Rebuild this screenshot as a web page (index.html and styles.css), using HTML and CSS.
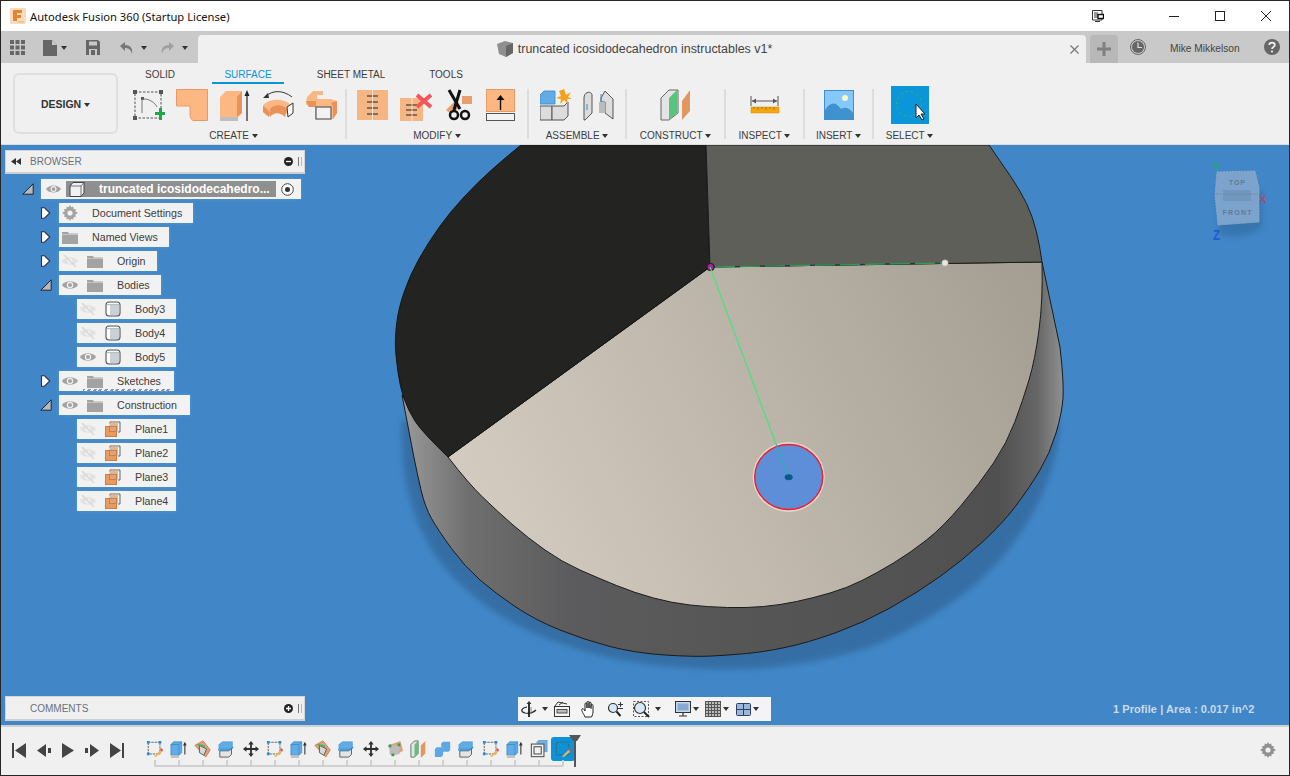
FILE: index.html
```html
<!DOCTYPE html>
<html lang="en">
<head>
<meta charset="utf-8">
<title>Autodesk Fusion 360</title>
<link rel="stylesheet" href="styles.css">
</head>
<body>
<svg class="defs" width="0" height="0" aria-hidden="true">
  <defs>
    <symbol id="eye" viewBox="0 0 16 12"><path d="M0 6C3 1 13 1 16 6C13 11 3 11 0 6Z" fill="#a3a3a3"/><circle cx="8" cy="6" r="3.2" fill="#f2f2f2"/><circle cx="8" cy="6" r="2" fill="#a3a3a3"/></symbol>
    <symbol id="eye-off" viewBox="0 0 16 12"><path d="M0 6C3 1 13 1 16 6C13 11 3 11 0 6Z" fill="#e2e2e2"/><circle cx="8" cy="6" r="2.6" fill="#f2f2f2"/><path d="M2 0L14 12" stroke="#d8d8d8" stroke-width="1.6"/></symbol>
    <symbol id="folder" viewBox="0 0 16 14"><path d="M0 2H6L7 3.5H16V14H0Z" fill="#a3a3a3"/><path d="M0 4.5H16" stroke="#d4d4d4" stroke-width=".7"/></symbol>
    <symbol id="body" viewBox="0 0 16 16"><rect x="1" y="1" width="14" height="14" rx="3" fill="#fff" stroke="#555" stroke-width="1.1"/><rect x="5" y="4" width="9" height="10" fill="#c9d0d6"/><path d="M1.5 3.6H14.5" stroke="#999" stroke-width=".7"/></symbol>
    <symbol id="plane" viewBox="0 0 16 16"><path d="M5 3V1H15V11H13" fill="none" stroke="#666"/><rect x="4.500" y="1.500" width="8.500" height="9" fill="#e1b598"/><rect x="0.500" y="5.500" width="11" height="10" fill="#e79a62" stroke="#d07f44"/><rect x="4.500" y="5.500" width="7" height="5" fill="#dba27c" stroke="#c77b45" stroke-width=".8"/></symbol>
    <symbol id="exp-right" viewBox="0 0 11 12"><path d="M1.500 .8H4.500L9.800 6L4.500 11.200H1.500Z" fill="#fff" stroke="#2a3140" stroke-width="1.1"/></symbol>
    <symbol id="exp-down" viewBox="0 0 12 12"><path d="M.8 11.200L11.200 .8V11.200Z" fill="#b9b9b9" stroke="#20252e" stroke-width="1"/></symbol>
    <symbol id="tl-sketch" viewBox="0 0 20 20"><rect x="2.500" y="2.500" width="13" height="13" fill="none" stroke="#555" stroke-dasharray="2.500 1"/><path d="M1 1h3v3h-3zM14 1h3v3h-3zM1 14h3v3h-3z" fill="#1c8fe0"/><path d="M9 18L16 11L18 13L11 19Z" fill="#e5b95c"/><path d="M15.500 10.500L17 9L19 11L18 13Z" fill="#e24a5c"/></symbol>
    <symbol id="tl-extrude" viewBox="0 0 20 20"><path d="M1 5L4 2H13V14L10 17H1Z" fill="#62ace6" stroke="#2f82c4" stroke-width=".7"/><path d="M1 5H10V17M10 5L13 2" fill="none" stroke="#2f82c4" stroke-width=".7"/><path d="M1 17H10V20H1Z" fill="#c4c4c4"/><path d="M16.500 4V16" stroke="#333" stroke-width="1.200"/><path d="M14.500 6L16.500 2L18.500 6Z" fill="#333"/></symbol>
    <symbol id="tl-loft" viewBox="0 0 20 20"><path d="M1 6L10 1L18 11L13 19Z" fill="#dda27a" stroke="#c77d4c"/><path d="M6 6L14 10L11 17L6 14Z" fill="#d7d7d7" stroke="#555"/><path d="M4 5L12 7" stroke="#39b56a" stroke-width="1.600"/></symbol>
    <symbol id="tl-split" viewBox="0 0 20 20"><path d="M1 5L5 2H16V8L13 10H1Z" fill="#62ace6" stroke="#2f82c4" stroke-width=".5"/><path d="M2 12H12L15 9V16L12 19H2Z" fill="#e4e4e4" stroke="#555"/><path d="M0 11H13L17 8" fill="none" stroke="#1c8fe0" stroke-width="1.400"/></symbol>
    <symbol id="tl-move" viewBox="0 0 20 20"><path d="M10 1L13 5H11V9H15V7L19 10L15 13V11H11V15H13L10 19L7 15H9V11H5V13L1 10L5 7V9H9V5H7Z" fill="#2e2e2e"/></symbol>
    <symbol id="tl-pattern" viewBox="0 0 20 20"><path d="M2 6L16 1L19 12L8 18Z" fill="#dca27c"/><rect x="4" y="6" width="11" height="10" fill="#bcbcbc"/><path d="M3 5h3v3h-3zM13 4h3v3h-3zM6 15h3v3h-3z" fill="#27a650"/></symbol>
    <symbol id="tl-construct" viewBox="0 0 20 20"><path d="M1 5L5 1H9V15L5 19H1Z" fill="#e4e4e4" stroke="#666"/><path d="M5 5L9 1V15L5 19Z" fill="#58c47e"/><path d="M12 6L17 1V15L12 20Z" fill="#e1975f"/></symbol>
    <symbol id="tl-combine" viewBox="0 0 20 20"><path d="M1 10L3 8H10V17L8 19H1Z" fill="#5da8e4"/><path d="M8 4L10 2H18V11L16 13H10V8H8Z" fill="#5da8e4"/></symbol>
    <symbol id="tl-offset" viewBox="0 0 20 20"><path d="M7 3L10 0H19V13H16" fill="#6fb0e5" stroke="#5a94c6" stroke-width=".7"/><rect x="1.500" y="4.500" width="14" height="14" fill="#f1f1f1" stroke="#555" stroke-width="1.200"/><rect x="4.500" y="7.500" width="8" height="8" fill="none" stroke="#555" stroke-width="1.200"/></symbol>
    <symbol id="tl-sketch-active" viewBox="0 0 20 20"><rect x="2.500" y="2.500" width="14" height="14" fill="none" stroke="#5a5a5a" stroke-dasharray="3 1"/><path d="M9 18L16 11L18 13L11 19Z" fill="#e5b95c"/><path d="M15.500 10.500L17 9L19 11L18 13Z" fill="#e24a5c"/></symbol>
  </defs>
</svg>

<div class="window">
  <header class="titlebar">
    <svg class="app-logo" viewBox="0 0 16 16"><rect width="16" height="16" rx="1" fill="#f8dcc0"/><path d="M3 2H12V5H7V7H11V10H7V13H3Z" fill="#e8842c"/><path d="M8 13H14V15H8Z" fill="#f4c496"/></svg>
    <span class="app-title">Autodesk Fusion 360 (Startup License)</span>
    <div class="win-controls">
      <span class="win-btn"><svg width="12" height="12" viewBox="0 0 12 12"><path d="M.5 .5H10V10H.5ZM3 2V8M5 2V8" fill="none" stroke="#333"/><rect x="6" y="4.500" width="5.500" height="4" fill="#fff" stroke="#111" stroke-width="1.400"/><path d="M3 11.500H8" stroke="#333"/></svg></span>
      <span class="win-btn"><svg width="12" height="12" viewBox="0 0 12 12"><path d="M1 6.500H11" stroke="#222"/></svg></span>
      <span class="win-btn"><svg width="12" height="12" viewBox="0 0 12 12"><rect x="1.500" y="1.500" width="9" height="9" fill="none" stroke="#222"/></svg></span>
      <span class="win-btn"><svg width="12" height="12" viewBox="0 0 12 12"><path d="M1 1L11 11M11 1L1 11" stroke="#222"/></svg></span>
    </div>
  </header>

  <div class="tabbar">
    <div class="quick">
      <svg class="q-apps" width="15" height="15" viewBox="0 0 15 15"><path d="M0 0h4v4H0zM5.500 0h4v4h-4zM11 0h4v4h-4zM0 5.500h4v4H0zM5.500 5.500h4v4h-4zM11 5.500h4v4h-4zM0 11h4v4H0zM5.500 11h4v4h-4zM11 11h4v4h-4z" fill="#666"/></svg>
      <svg class="q-file" width="14" height="16" viewBox="0 0 14 16"><path d="M0 0H9L14 5V16H0Z" fill="#666"/><path d="M9 0V5H14" fill="#c8c8c8"/></svg>
      <span class="caret q-caret"></span>
      <svg class="q-save" width="14" height="15" viewBox="0 0 14 15"><path d="M0 0H12L14 2V15H0Z" fill="#666"/><rect x="3" y="1.500" width="8" height="4" fill="#c8c8c8"/><rect x="3" y="9" width="8" height="6" fill="#c8c8c8"/><rect x="5" y="10" width="4" height="5" fill="#666"/></svg>
      <svg class="q-undo" width="15" height="14" viewBox="0 0 15 14"><path d="M1 5L6 1V4C12 4 14 8 13 13C12 9 10 7 6 7V10Z" fill="#777"/></svg>
      <span class="caret q-caret q-wide"></span>
      <svg class="q-redo" width="15" height="14" viewBox="0 0 15 14"><path d="M14 5L9 1V4C3 4 1 8 2 13C3 9 5 7 9 7V10Z" fill="#a0a0a0"/></svg>
      <span class="caret q-caret q-wide q-off"></span>
    </div>
    <div class="doc-tab">
      <svg width="16" height="16" viewBox="0 0 16 16"><path d="M0 3L8 0L16 2V12L9 16L2 13Z" fill="#8f8f8f"/><path d="M9 5L16 2V12L9 16Z" fill="#666"/></svg>
      <span class="doc-title">truncated icosidodecahedron instructables v1*</span>
      <svg class="doc-close" width="9" height="9" viewBox="0 0 9 9"><path d="M.5 .5L8.500 8.500M8.500 .5L.5 8.500" stroke="#777" stroke-width="1.200"/></svg>
    </div>
    <div class="new-tab"><svg width="14" height="14" viewBox="0 0 14 14"><path d="M5.500 0h3v5.500H14v3H8.500V14h-3V8.500H0v-3h5.500z" fill="#808080"/></svg></div>
    <svg class="clock" width="16" height="16" viewBox="0 0 16 16"><circle cx="8" cy="8" r="7.500" fill="none" stroke="#666"/><circle cx="8" cy="8" r="6" fill="#666"/><path d="M8 3.500V8.500H12" fill="none" stroke="#ddd" stroke-width="1.200"/></svg>
    <span class="user-name">Mike Mikkelson</span>
    <svg class="help" width="16" height="16" viewBox="0 0 16 16"><circle cx="8" cy="8" r="8" fill="#666"/><path d="M5.300 6C5.300 2.800 10.800 2.800 10.800 6C10.800 8 8 8 8 10" fill="none" stroke="#eee" stroke-width="1.800"/><circle cx="8" cy="12.500" r="1.100" fill="#eee"/></svg>
  </div>

  <section class="ribbon">
    <button class="design-btn">DESIGN <span class="caret"></span></button>
    <div class="ribbon-main">
      <nav class="tabs">
        <span class="tab tab-solid">SOLID</span>
        <span class="tab tab-surface">SURFACE</span>
        <span class="tab tab-sheet">SHEET METAL</span>
        <span class="tab tab-tools">TOOLS</span>
      </nav>
      <div class="tools">
        <div class="group g-create">
          <div class="icons">
            <svg class="ti" viewBox="0 0 32 32"><rect x="2" y="3" width="26" height="26" fill="none" stroke="#555" stroke-dasharray="2.500 1.500"/><path d="M0 1h4v4H0zM26 1h4v4h-4zM0 27h4v4H0zM8 8h3v3H8z" fill="#555"/><path d="M9 24V10H11C17 10 22 14 24 18" fill="none" stroke="#777"/><path d="M22 23h4v-4h3v4h4v3h-4v5h-3v-5h-4z" fill="#1fa64a"/></svg>
            <svg class="ti" viewBox="0 0 32 32"><path d="M.5 .5H31.500V31.500H18C15 31.500 14 28 14 25V17H.5Z" fill="#fdb782" stroke="#e89a66"/></svg>
            <svg class="ti" viewBox="0 0 32 32"><path d="M1 8L7 2H23V24L19 28H1Z" fill="#fdb782"/><path d="M18 8L23 2V24L18 28Z" fill="#e8935a"/><path d="M1 28H19V32H1Z" fill="#bfbfbf"/><path d="M28 32V4" stroke="#222" stroke-width="1.200"/><path d="M25.500 7L28 1L30.500 7Z" fill="#222"/></svg>
            <svg class="ti" viewBox="0 0 32 32"><path d="M1 16C8 9 22 9 29 16L27 26C20 21 10 21 6 27L1 23Z" fill="#fdb782"/><path d="M1 23V17C8 22 9 24 7 28Z" fill="#e8935a"/><path d="M8 20C12 15 20 15 25 20L23 28C18 23 12 23 8 28Z" fill="#e8935a"/><path d="M25 18L31 14V24L26 28Z" fill="#fff" stroke="#333"/><path d="M4 7C11 1 21 1 30 8" fill="none" stroke="#333"/><path d="M1 9L6 4L7 9Z" fill="#333"/></svg>
            <svg class="ti" viewBox="0 0 32 32"><path d="M2 8L8 2H18V6H12V10H26L32 12V24L28 30H10V18H4L1 15Z" fill="#fdb782"/><path d="M1 12H11V18H4ZM26 14L32 12V24L28 30V18Z" fill="#e8935a"/><rect x="11" y="18" width="15" height="12" fill="#f2f2f2" stroke="#666" stroke-width="1.300"/></svg>
          </div>
          <span class="g-label">CREATE <span class="caret"></span></span>
        </div>
        <i class="sep sep-first"></i>
        <div class="group g-modify">
          <div class="icons">
            <svg class="ti" viewBox="0 0 32 32"><rect y="1" width="31" height="30" fill="#f6b684"/><path d="M10 7H21M10 13H21M10 19H21M10 25H21" stroke="#222" stroke-width="1"/><path d="M15.500 1V31" stroke="#fff" stroke-width=".7"/></svg>
            <svg class="ti" viewBox="0 0 32 32"><rect y="9" width="23" height="23" fill="#f6b684"/><path d="M6 16H17M6 21H17M6 26H17" stroke="#222"/><path d="M12 9V32" stroke="#fff" stroke-width=".7"/><path d="M17 6L31 18M31 6L17 18" stroke="#f2555a" stroke-width="4"/></svg>
            <svg class="ti" viewBox="0 0 32 32"><path d="M3 21L11 13L16 18L9 26Z" fill="#e6a070"/><rect x="19" y="7" width="10" height="8" fill="#e6a070"/><path d="M6 1L17 20" stroke="#111" stroke-width="3"/><path d="M17 1L11 21" stroke="#111" stroke-width="3"/><circle cx="11" cy="26" r="4" fill="#f0f0f0" stroke="#111" stroke-width="2.500"/><circle cx="22" cy="26" r="4" fill="#f0f0f0" stroke="#111" stroke-width="2.500"/></svg>
            <svg class="ti" viewBox="0 0 32 32"><rect x=".5" y=".5" width="28" height="22" fill="#fdb782" stroke="#e89a66"/><rect x=".5" y="24.500" width="28" height="7" fill="#f3f3f3" stroke="#555"/><path d="M14.500 21V10" stroke="#111" stroke-width="1.400"/><path d="M10.500 11L14.500 6L18.500 11Z" fill="#111"/></svg>
          </div>
          <span class="g-label">MODIFY <span class="caret"></span></span>
        </div>
        <i class="sep"></i>
        <div class="group g-assemble">
          <div class="icons">
            <svg class="ti" viewBox="0 0 32 32"><path d="M0 6L4 2H15V15H0Z" fill="#62ace6" stroke="#3a87c9" stroke-width=".8"/><path d="M0 17H12V31H0Z" fill="#dcdcdc" stroke="#555"/><path d="M12 17H24L28 13V27L24 31H12Z" fill="#dcdcdc" stroke="#555"/><path d="M24 0L26 6L31 3L28 8L32 10L27 10L28 15L24 11L20 15L21 10L16 9L21 7L19 2Z" fill="#f4a21a"/></svg>
            <svg class="ti" viewBox="0 0 32 32"><path d="M1 9C1 2 9 2 9 6V24L2 31H1Z" fill="#dcdcdc" stroke="#555"/><path d="M4 15V21" stroke="#2d8fd4"/><path d="M18 9L22 2L30 10V30L22 24V13H18Z" fill="#dcdcdc" stroke="#555"/><rect x="16" y="13" width="6" height="11" fill="#bbb"/><path d="M18 5V12" stroke="#2d8fd4"/></svg>
          </div>
          <span class="g-label">ASSEMBLE <span class="caret"></span></span>
        </div>
        <i class="sep"></i>
        <div class="group g-construct">
          <div class="icons">
            <svg class="ti" viewBox="0 0 32 32"><path d="M1 9L9 1H18V24L9 31H1Z" fill="#e4e4e4" stroke="#666"/><path d="M9 9L17 1V24L9 31Z" fill="#58c47e"/><path d="M22 12L30 1V22L22 31Z" fill="#e1975f"/></svg>
          </div>
          <span class="g-label">CONSTRUCT <span class="caret"></span></span>
        </div>
        <i class="sep"></i>
        <div class="group g-inspect">
          <div class="icons">
            <svg class="ti" viewBox="0 0 32 32"><path d="M2 7V17M29 7V17" stroke="#555"/><path d="M3 12H28" stroke="#555"/><path d="M3 12L7 9.500V14.500ZM28 12L24 9.500V14.500Z" fill="#555"/><rect x="2" y="18" width="28" height="6" fill="#f5a50f" stroke="#d88a08" stroke-width=".5"/><path d="M5 18V20M9 18V21M13 18V20M17 18V21M21 18V20M25 18V21" stroke="#8a6a20" stroke-width=".7"/></svg>
          </div>
          <span class="g-label">INSPECT <span class="caret"></span></span>
        </div>
        <i class="sep"></i>
        <div class="group g-insert">
          <div class="icons">
            <svg class="ti" viewBox="0 0 32 32"><rect x="1.500" y="1.500" width="29" height="29" fill="#85c8fb" stroke="#3f8fd0"/><circle cx="22" cy="9" r="3" fill="#fdf9c0"/><path d="M2 30V21C8 12 13 13 18 20C21 18 26 18 30 24V30Z" fill="#3e93cf"/></svg>
          </div>
          <span class="g-label">INSERT <span class="caret"></span></span>
        </div>
        <i class="sep"></i>
        <div class="group g-select">
          <div class="icons">
            <svg class="ti ti-select" viewBox="0 0 38 38"><rect width="38" height="38" fill="#0b96d9"/><circle cx="18" cy="18" r="12.500" fill="none" stroke="#2fb27a" stroke-dasharray="3 2.500"/><path d="M25 18V32L28 29L31 34L33 33L30 28H34Z" fill="#fff" stroke="#222"/></svg>
          </div>
          <span class="g-label">SELECT <span class="caret"></span></span>
        </div>
      </div>
    </div>
  </section>

  <main class="viewport">
    <svg class="scene" viewBox="1 145 1288 580" preserveAspectRatio="none">
      <defs>
        <linearGradient id="side" x1="402" x2="1064" y1="0" y2="0" gradientUnits="userSpaceOnUse">
          <stop offset="0" stop-color="#9a9a9a"/><stop offset=".1" stop-color="#6f6f6f"/><stop offset=".25" stop-color="#5c5c5e"/><stop offset=".5" stop-color="#565656"/><stop offset=".9" stop-color="#505050"/><stop offset=".96" stop-color="#666"/><stop offset="1" stop-color="#929292"/>
        </linearGradient>
        <linearGradient id="beige" x1="480" y1="540" x2="1030" y2="280" gradientUnits="userSpaceOnUse">
          <stop offset="0" stop-color="#d4ccc0"/><stop offset="1" stop-color="#a59e92"/>
        </linearGradient>
        <filter id="soft" x="-10%" y="-10%" width="120%" height="120%"><feGaussianBlur stdDeviation="3"/></filter>
        <filter id="soft2" x="-30%" y="-30%" width="160%" height="160%"><feGaussianBlur stdDeviation="3"/></filter>
      </defs>
      <rect x="0" y="145" width="1290" height="581" fill="#4187c8"/>
      <path class="shadow" d="M402 420Q400 463 409 496Q418 530 435 555Q452 580 485 605Q518 630 568 646Q618 663 674 667Q730 672 775 667Q820 662 858 651Q897 640 947 606Q997 573 1027 523Q1058 473 1060 420Z" fill="#356ea4" filter="url(#soft)"/>
      <path d="M1042 262L1060 347Q1064 383 1063 398Q1062 413 1056 433Q1050 453 1040 470Q1030 487 1016.500 505Q1003 523 983 541.500Q963 560 940 576.500Q917 593 890 608Q863 623 835 633Q807 643 785 647.500Q763 652 746.500 653.500Q730 655 712.500 656Q695 657 665 655Q635 653 610 646.500Q585 640 560 630Q535 620 515 606.500Q495 593 480 580Q465 567 451.500 548.500Q438 530 431.500 518.500Q425 507 421 490Q417 473 413.500 455Q410 437 402 395L448 457Z" fill="url(#side)" stroke="#1a1a1a" stroke-width="1"/>
      <path d="M710 267L1042 262Q1043 300 1039 330Q1035 360 1029 380Q1023 400 1015 421.500Q1007 443 993.500 463Q980 483 961.500 505Q943 527 926.500 540Q910 553 893.500 563Q877 573 862 580.500Q847 588 830 593Q813 598 796.500 601.500Q780 605 763.500 606.500Q747 608 727.500 607.500Q708 607 690 605Q672 603 653.500 598Q635 593 616.500 585.500Q598 578 580 570Q562 562 545 550Q528 538 513 525Q498 512 483 497.500Q468 483 448 457Z" fill="url(#beige)" stroke="#1c1c1c" stroke-width="1"/>
      <path d="M710 267L448 457Q422 432 415 421Q408 410 404 398.500Q400 387 398 372Q396 357 395.500 348.500Q395 340 396.500 325Q398 310 404 292.500Q410 275 419 259Q428 243 439 227.500Q450 212 464 197Q478 182 491.500 170Q505 158 521 145H706Z" fill="#232322" stroke="#141414" stroke-width="1"/>
      <path d="M706 145L710 267L1042 262Q1040 247 1036.500 232Q1033 217 1026.500 203.500Q1020 190 1010 175.500Q1000 161 989 145Z" fill="#5f5f5a" stroke="#1c1c1c" stroke-width="1"/>
      <path d="M710 267L945 263" stroke="#2f9a58" stroke-width="1.300"/>
      <path d="M710 267L945 263" stroke="#333" stroke-width="1.300" stroke-dasharray="5 20"/>
      <circle cx="945" cy="263" r="3.200" fill="#e8e8e0" stroke="#a0a0a0" stroke-width=".6"/>
      <circle cx="710.500" cy="267" r="3.500" fill="#b0209a" stroke="#30182a" stroke-width="1.200"/>
      <ellipse cx="788.700" cy="477" rx="36" ry="35" fill="#ded8ce"/>
      <ellipse cx="788.700" cy="477" rx="34" ry="32.500" fill="#5f8ed8" stroke="#f01c2c" stroke-width="1.400"/>
      <path d="M710 267L776 444" stroke="#3ce87a" stroke-width="1.100"/>
      <path d="M776 444L788 476" stroke="#21b6b0" stroke-width="1.100"/>
      <ellipse cx="788.700" cy="477.300" rx="4" ry="3" fill="#0c5a8c"/>

      <g class="navcube">
        <path d="M1219 235C1236 238 1250 236 1262 228L1262 190L1216 190Z" fill="#2c5f8e" opacity=".45" filter="url(#soft2)"/>
        <path d="M1217 172L1255 171L1259 188L1259 222L1218 225L1215 195Z" fill="#7ca3cb" stroke="#8ea8c4" stroke-dasharray="2 1"/>
        <rect x="1223" y="190" width="28" height="11" fill="#7097c0"/>
        <path d="M1215 194L1259 194" stroke="#7e8a99" stroke-dasharray="3 1"/>
        <text x="1237" y="184.500" class="cube-text" text-anchor="middle" textLength="16">TOP</text>
        <text x="1237" y="214.500" class="cube-text" text-anchor="middle" textLength="29">FRONT</text>
        <text x="1216" y="172" class="axis axis-tall axis-y" text-anchor="middle" textLength="6" lengthAdjust="spacingAndGlyphs">Y</text>
        <text x="1263" y="203" class="axis axis-x" text-anchor="middle">X</text>
        <text x="1216.500" y="240" class="axis axis-tall axis-z" text-anchor="middle" textLength="7" lengthAdjust="spacingAndGlyphs">Z</text>
      </g>
    </svg>

    <aside class="browser">
      <div class="panel-head">
        <svg class="collapse" width="10" height="7" viewBox="0 0 10 7"><path d="M5 0V7L0 3.500ZM10 0V7L5 3.500Z" fill="#333"/></svg>
        <span class="panel-title">BROWSER</span>
        <svg class="panel-btn" width="9" height="9" viewBox="0 0 9 9"><circle cx="4.500" cy="4.500" r="4.500" fill="#222"/><path d="M2 4.500H7" stroke="#fff" stroke-width="1.300"/></svg>
        <i class="panel-grip"></i>
      </div>
      <ul class="tree">
        <li class="tree-item lvl0">
          <svg class="exp" viewBox="0 0 12 12"><use href="#exp-down"/></svg>
          <div class="node root-node">
            <svg class="eye root-eye"><use href="#eye"/></svg>
            <div class="root-name">
              <svg class="root-cube" width="16" height="15" viewBox="0 0 16 15"><path d="M1 4L4 .5H15V11L12 14.500H1Z" fill="#eef0f2" stroke="#444"/><path d="M1 4H12V14.500M12 4L15 .5" fill="none" stroke="#444" stroke-width=".7"/></svg>
              <span class="root-label">truncated icosidodecahedro...</span>
            </div>
            <svg class="radio" width="13" height="13" viewBox="0 0 13 13"><circle cx="6.500" cy="6.500" r="5.800" fill="#fff" stroke="#444"/><circle cx="6.500" cy="6.500" r="2.500" fill="#333"/></svg>
          </div>
        </li>
        <li class="tree-item lvl1">
          <svg class="exp exp-r" viewBox="0 0 11 12"><use href="#exp-right"/></svg>
          <div class="node">
            <svg class="gear" viewBox="0 0 16 16"><path d="M8 0l1.300 2.300 2-.9.300 2.500 2.500.3-.9 2L16 8l-2.800 1.800.9 2-2.500.3-.3 2.500-2-.9L8 16l-1.300-2.300-2 .9-.3-2.500-2.500-.3.9-2L0 8l2.800-1.800-.9-2 2.500-.3.300-2.500 2 .9z" fill="#a3a3a3"/><circle cx="8" cy="8" r="2.600" fill="#f2f2f2"/></svg>
            <span class="label">Document Settings</span>
          </div>
        </li>
        <li class="tree-item lvl1">
          <svg class="exp exp-r" viewBox="0 0 11 12"><use href="#exp-right"/></svg>
          <div class="node">
            <svg class="folder"><use href="#folder"/></svg>
            <span class="label">Named Views</span>
          </div>
        </li>
        <li class="tree-item lvl1">
          <svg class="exp exp-r" viewBox="0 0 11 12"><use href="#exp-right"/></svg>
          <div class="node">
            <svg class="eye"><use href="#eye-off"/></svg>
            <svg class="folder"><use href="#folder"/></svg>
            <span class="label">Origin</span>
          </div>
        </li>
        <li class="tree-item lvl1">
          <svg class="exp" viewBox="0 0 12 12"><use href="#exp-down"/></svg>
          <div class="node">
            <svg class="eye"><use href="#eye"/></svg>
            <svg class="folder"><use href="#folder"/></svg>
            <span class="label">Bodies</span>
          </div>
        </li>
        <li class="tree-item lvl2"><div class="node"><svg class="eye"><use href="#eye-off"/></svg><svg class="item-icon"><use href="#body"/></svg><span class="label">Body3</span></div></li>
        <li class="tree-item lvl2"><div class="node"><svg class="eye"><use href="#eye-off"/></svg><svg class="item-icon"><use href="#body"/></svg><span class="label">Body4</span></div></li>
        <li class="tree-item lvl2"><div class="node"><svg class="eye"><use href="#eye"/></svg><svg class="item-icon"><use href="#body"/></svg><span class="label">Body5</span></div></li>
        <li class="tree-item lvl1">
          <svg class="exp exp-r" viewBox="0 0 11 12"><use href="#exp-right"/></svg>
          <div class="node node-hatched">
            <svg class="eye"><use href="#eye"/></svg>
            <svg class="folder"><use href="#folder"/></svg>
            <span class="label">Sketches</span>
          </div>
        </li>
        <li class="tree-item lvl1">
          <svg class="exp" viewBox="0 0 12 12"><use href="#exp-down"/></svg>
          <div class="node node-long">
            <svg class="eye"><use href="#eye"/></svg>
            <svg class="folder"><use href="#folder"/></svg>
            <span class="label">Construction</span>
          </div>
        </li>
        <li class="tree-item lvl2"><div class="node"><svg class="eye"><use href="#eye-off"/></svg><svg class="item-icon"><use href="#plane"/></svg><span class="label">Plane1</span></div></li>
        <li class="tree-item lvl2"><div class="node"><svg class="eye"><use href="#eye-off"/></svg><svg class="item-icon"><use href="#plane"/></svg><span class="label">Plane2</span></div></li>
        <li class="tree-item lvl2"><div class="node"><svg class="eye"><use href="#eye-off"/></svg><svg class="item-icon"><use href="#plane"/></svg><span class="label">Plane3</span></div></li>
        <li class="tree-item lvl2"><div class="node"><svg class="eye"><use href="#eye-off"/></svg><svg class="item-icon"><use href="#plane"/></svg><span class="label">Plane4</span></div></li>
      </ul>
    </aside>

    <div class="comments">
      <span class="panel-title">COMMENTS</span>
      <svg class="panel-btn" width="9" height="9" viewBox="0 0 9 9"><circle cx="4.500" cy="4.500" r="4.500" fill="#222"/><path d="M2 4.500H7M4.500 2V7" stroke="#fff" stroke-width="1.300"/></svg>
      <i class="panel-grip"></i>
    </div>

    <div class="navbar">
      <svg width="16" height="16" viewBox="0 0 16 16"><path d="M8 0L10.500 3H9V16H7V3H5.500Z" fill="#333"/><path d="M6 6C0 7-1 11 4 12C7 12.500 12 12 15 9" fill="none" stroke="#222" stroke-width="1.200"/><path d="M10 6V13" stroke="#888"/></svg><span class="caret nav-caret nav-caret-wide"></span>
      <svg class="nav-look" width="16" height="16" viewBox="0 0 16 16"><rect x=".5" y="5.500" width="15" height="10" fill="#f4f4f4" stroke="#333"/><rect x="3" y="8.500" width="10" height="3.500" fill="#bbb" stroke="#333" stroke-width=".8"/><path d="M1 5L4 1L13 3M5 4L9 1" fill="none" stroke="#333"/></svg>
      <svg class="nav-hand" width="16" height="17" viewBox="0 0 16 17"><path d="M4 16C3 13 0 10 1 8C2 7 3 8 4 10V3C4 1.500 6 1.500 6 3V7V1.500C6 0 8 0 8 1.500V7V2C8 .8 10 .8 10 2V7.500V4C10 3 12 3 12 4.500V11C12 13 11 15 10.500 16Z" fill="#fff" stroke="#222"/></svg>
      <svg class="nav-zoom" width="17" height="16" viewBox="0 0 17 16"><circle cx="6" cy="7" r="4.500" fill="#d7e9f7" stroke="#333" stroke-width="1.200"/><path d="M9.500 10.500L13.500 15" stroke="#222" stroke-width="2"/><path d="M11 3.500H16M13.500 1V6M11 7.500H16" stroke="#333"/></svg>
      <svg class="nav-fit" width="17" height="17" viewBox="0 0 17 17"><rect x=".5" y=".5" width="15" height="15" fill="none" stroke="#555" stroke-dasharray="2 1.500"/><circle cx="7" cy="7" r="5.500" fill="#d7e9f7" stroke="#333" stroke-width="1.200"/><path d="M11 11L16 16" stroke="#222" stroke-width="2"/></svg><span class="caret nav-caret nav-caret-wide"></span>
      <svg class="nav-display" width="16" height="16" viewBox="0 0 16 16"><rect x=".5" y=".5" width="15" height="11" fill="#c4d8ee" stroke="#333"/><rect x="2.500" y="2.500" width="11" height="7" fill="#89a9cf"/><path d="M4 15H12M8 12V15" stroke="#333" stroke-width="1.200"/></svg><span class="caret nav-caret"></span>
      <svg class="nav-grid" width="16" height="16" viewBox="0 0 16 16"><rect width="16" height="16" fill="#bdbdbd"/><path d="M.5 0V16M3.500 0V16M6.500 0V16M9.500 0V16M12.500 0V16M15.500 0V16M0 .5H16M0 3.500H16M0 6.500H16M0 9.500H16M0 12.500H16M0 15.500H16" stroke="#555"/></svg><span class="caret nav-caret"></span>
      <svg class="nav-views" width="15" height="13" viewBox="0 0 15 13"><rect x=".5" y=".5" width="14" height="12" rx="1" fill="#9bb8da" stroke="#2e3f66"/><path d="M7.500 0V13M0 6.500H15" stroke="#2e3f66"/></svg><span class="caret nav-caret"></span>
    </div>

    <div class="status">1 Profile | Area : 0.017 in^2</div>
  </main>

  <footer class="timeline">
    <div class="player">
      <svg width="14" height="15" viewBox="0 0 14 15"><path d="M0 0H2V15H0ZM14 0V15L3 7.500Z" fill="#444"/></svg>
      <svg width="14" height="13" viewBox="0 0 14 13"><path d="M9 0V13L0 6.500ZM11 4H14V9H11Z" fill="#444"/></svg>
      <svg width="12" height="15" viewBox="0 0 12 15"><path d="M0 0L12 7.500L0 15Z" fill="#444"/></svg>
      <svg width="14" height="13" viewBox="0 0 14 13"><path d="M5 0V13L14 6.500ZM0 4H3V9H0Z" fill="#444"/></svg>
      <svg width="14" height="15" viewBox="0 0 14 15"><path d="M14 0H12V15H14ZM0 0V15L11 7.500Z" fill="#444"/></svg>
    </div>
    <div class="steps">
      <span class="step"><svg><use href="#tl-sketch"/></svg></span>
      <span class="step"><svg><use href="#tl-extrude"/></svg></span>
      <span class="step"><svg><use href="#tl-loft"/></svg></span>
      <span class="step"><svg><use href="#tl-split"/></svg></span>
      <span class="step"><svg><use href="#tl-move"/></svg></span>
      <span class="step"><svg><use href="#tl-sketch"/></svg></span>
      <span class="step"><svg><use href="#tl-extrude"/></svg></span>
      <span class="step"><svg><use href="#tl-loft"/></svg></span>
      <span class="step"><svg><use href="#tl-split"/></svg></span>
      <span class="step"><svg><use href="#tl-move"/></svg></span>
      <span class="step"><svg><use href="#tl-pattern"/></svg></span>
      <span class="step"><svg><use href="#tl-construct"/></svg></span>
      <span class="step"><svg><use href="#tl-combine"/></svg></span>
      <span class="step"><svg><use href="#tl-split"/></svg></span>
      <span class="step"><svg><use href="#tl-sketch"/></svg></span>
      <span class="step"><svg><use href="#tl-extrude"/></svg></span>
      <span class="step"><svg><use href="#tl-offset"/></svg></span>
      <span class="step step-active"><svg><use href="#tl-sketch-active"/></svg></span>
      <svg class="marker" width="12" height="32" viewBox="0 0 12 32"><path d="M0 0H12L8 6H7V32H5V6H4Z" fill="#555"/></svg>
    </div>
    <svg class="tl-gear" width="16" height="16" viewBox="0 0 16 16"><path d="M8 0l1.300 2.300 2-.9.300 2.500 2.500.3-.9 2L16 8l-2.800 1.800.9 2-2.500.3-.3 2.500-2-.9L8 16l-1.300-2.300-2 .9-.3-2.500-2.500-.3.9-2L0 8l2.800-1.800-.9-2 2.500-.3.300-2.500 2 .9z" fill="#909090"/><circle cx="8" cy="8" r="2.600" fill="#f0f0f0"/></svg>
  </footer>
</div>
</body>
</html>
```
FILE: styles.css
```css
* { box-sizing: border-box; }
html, body { margin: 0; padding: 0; }
body { width: 1290px; height: 776px; overflow: hidden; font-family: "Liberation Sans", Arial, sans-serif; color: #3c3c3c; background: #f0f0f0; }
.defs { position: absolute; }
svg { display: block; flex: none; }
ul { list-style: none; margin: 0; padding: 0; }

.window { width: 1290px; height: 776px; border: 1px solid #262626; display: flex; flex-direction: column; }

/* title bar */
.titlebar { height: 30px; background: #fff; display: flex; align-items: center; padding-left: 9px; }
.app-logo { width: 16px; height: 16px; }
.app-title { font: 11.200px "Noto Sans", sans-serif; color: #111; margin-left: 4px; }
.win-controls { margin-left: auto; display: flex; }
.win-btn { width: 46px; height: 30px; display: flex; align-items: center; justify-content: center; }
.win-btn:first-child { margin-right: 30px; }

/* tabs row */
.tabbar { height: 32px; background: #c9c9c9; display: flex; align-items: flex-end; position: relative; }
.quick { width: 197px; height: 32px; display: flex; align-items: center; padding: 1px 0 0 9px; }
.q-file { margin-left: 18px; }
.q-save { margin-left: 19px; }
.q-undo { margin-left: 19px; }
.q-redo { margin-left: 13px; }
.q-caret { margin-left: 4px; border-top-color: #666; }
.q-wide { margin-left: 7px; }
.q-off { border-top-color: #9a9a9a; }
.caret { display: inline-block; width: 0; height: 0; border-left: 3.5px solid transparent; border-right: 3.5px solid transparent; border-top: 4px solid #333; vertical-align: 1px; }
.doc-tab { width: 888px; height: 28px; background: #f0f0f0; border-radius: 4px 4px 0 0; display: flex; align-items: center; justify-content: center; padding-right: 15px; position: relative; }
.doc-title { font-size: 12.450px; color: #444; margin-left: 5px; }
.doc-close { position: absolute; right: 7px; top: 10px; }
.new-tab { width: 28px; height: 28px; margin-left: 4px; background: #b8b8b8; border-radius: 4px 4px 0 0; display: flex; align-items: center; justify-content: center; }
.clock { margin: 0 0 8px 12px; }
.user-name { font-size: 10.200px; color: #444; margin: 0 0 9px 24px; }
.help { margin: 0 0 8px 24px; }

/* ribbon */
.ribbon { height: 82px; background: #f0f0f0; display: flex; border-bottom: 1px solid #dcdcdc; }
.design-btn { width: 105px; height: 61px; margin: 10px 0 0 12px; border: 2px solid #dfdfdf; border-radius: 6px; background: #f0f0f0; font: bold 10.500px "Liberation Sans", sans-serif; color: #333; padding: 1px 0 0; }
.ribbon-main { display: flex; flex-direction: column; padding-left: 15px; }
.tabs { height: 26px; display: flex; position: relative; }
.tab { font-size: 10px; color: #3c3c3c; line-height: 24px; height: 22px; text-align: center; white-space: nowrap; }
.tab-solid { width: 54px; }
.tab-surface { width: 72px; margin-left: 25px; color: #0696d7; border-bottom: 2px solid #0696d7; height: 21px; }
.tab-sheet { width: 80px; margin-left: 27px; }
.tab-tools { width: 60px; margin-left: 25px; }
.tools { display: flex; gap: 11px; }
.group { display: flex; flex-direction: column; align-items: center; }
.icons { display: flex; gap: 11px; height: 32px; }
.g-label { font-size: 10px; color: #3c3c3c; margin-top: 9px; line-height: 12px; white-space: nowrap; }
.g-create { width: 204px; }
.g-create .g-label { margin-right: 3px; }
.g-modify { width: 158px; }
.g-assemble { width: 74px; }
.g-construct { width: 75px; }
.g-inspect { width: 55px; }
.g-insert { width: 45px; }
.g-select { width: 49px; }
.ti { width: 32px; height: 32px; }
.ti-select { width: 38px; height: 38px; margin: -3px 0 0 1px; }
.sep { width: 2px; height: 50px; background: #dddddd; }
.sep-first { margin-left: -3px; }

/* viewport */
.viewport { height: 580px; position: relative; overflow: hidden; background: #4187c8; }
.scene { position: absolute; left: 0; top: 0; width: 100%; height: 100%; }
.cube-text { font: bold 7px "Liberation Sans", sans-serif; fill: #5f7a97; }
.axis { font: bold 11px "Liberation Sans", sans-serif; }
.axis-tall { font-size: 15px; }
.axis-x { fill: #a0507a; }
.axis-y { fill: #25a86a; }
.axis-z { fill: #2557d6; }

.browser { position: absolute; left: 4px; top: 5px; width: 300px; }
.panel-head, .comments { height: 24px; width: 300px; background: #f0f0f0; border: 1px solid #d6d6d6; border-bottom: 2px solid #cfcfcf; display: flex; align-items: center; }
.collapse { margin-left: 5px; }
.panel-title { font-size: 10px; color: #6a7078; margin-left: 9px; }
.comments .panel-title { margin-left: 24px; }
.panel-btn { margin-left: auto; }
.panel-grip { width: 4px; height: 9px; margin: 0 2px 0 5px; border-left: 1px solid #777; border-right: 1px solid #bbb; }

.tree { margin-top: 5px; padding-left: 17px; }
.tree-item { display: flex; align-items: center; height: 20px; margin-top: 4px; position: relative; }
.lvl1 { margin-left: 18px; }
.lvl2 { margin-left: 36px; padding-left: 19px; }
.lvl2 .node { width: 99px; padding-right: 0; }
.exp { width: 12px; height: 12px; margin-right: 7px; }
.exp-r { width: 11px; margin-right: 8px; }
.node { height: 20px; background: #f2f2f2; display: flex; align-items: center; padding: 0 11px 0 3px; gap: 9px; font-size: 10.700px; color: #3c3c3c; box-shadow: 0 0 3px rgba(255,255,255,.15); }
.node-long, .node-hatched { padding-right: 13px; }
.eye { width: 16px; height: 12px; }
.folder { width: 16px; height: 14px; }
.gear { width: 16px; height: 16px; }
.item-icon { width: 16px; height: 16px; }
.label { margin-left: 5px; white-space: nowrap; }
.root-node { width: 260px; padding: 0 0 0 5px; gap: 5px; }
.root-eye { width: 15px; }
.root-name { width: 210px; height: 16px; background: #8f8f8f; display: flex; align-items: center; padding-left: 3px; }
.root-label { font: bold 12px "Liberation Sans", sans-serif; color: #fff; margin-left: 14px; white-space: nowrap; }
.node-hatched { position: relative; }
.node-hatched::after { content: ""; position: absolute; left: 24px; right: 2px; bottom: -1px; height: 3px; background: repeating-linear-gradient(135deg, #7f93b5 0 2px, transparent 2px 4px); }

.comments { position: absolute; left: 4px; top: 551px; height: 25px; }

.navbar { position: absolute; left: 517px; top: 552px; width: 253px; height: 24px; background: #f4f4f4; display: flex; align-items: center; padding-left: 3px; }
.nav-caret { margin-left: 2px; }
.nav-caret-wide { margin-left: 5px; }
.nav-look { margin-left: 6px; }
.nav-hand { margin-left: 11px; }
.nav-zoom { margin-left: 10px; }
.nav-fit { margin-left: 9px; }
.nav-display { margin-left: 14px; }
.nav-grid { margin-left: 6px; }
.nav-views { margin-left: 7px; }

.status { position: absolute; left: 1112px; top: 558px; font: bold 11px "Liberation Sans", sans-serif; letter-spacing: .07px; color: #c9dbee; }

/* timeline */
.timeline { flex: 1; background: #f0f0f0; border-top: 2px solid #d0d0d0; display: flex; padding-left: 11px; position: relative; }
.player { width: 131px; height: 47px; display: flex; align-items: center; gap: 11px; }
.steps { display: flex; position: relative; height: 47px; padding-top: 10px; }
.steps::after { content: ""; position: absolute; left: 11px; width: 409px; top: 38px; height: 2px; background: #cfcfcf; }
.step { width: 24px; height: 24px; display: flex; align-items: flex-start; justify-content: center; position: relative; }
.step svg { width: 18px; height: 18px; margin-top: 3px; }
.step::after { content: ""; position: absolute; left: 11px; top: 23px; width: 2px; height: 6px; background: #cfcfcf; }
.step-active { background: #0a93d8; border-radius: 3px; }
.marker { position: absolute; left: 426px; top: 8px; z-index: 1; }
.tl-gear { position: absolute; left: 1259px; top: 15px; }
```
